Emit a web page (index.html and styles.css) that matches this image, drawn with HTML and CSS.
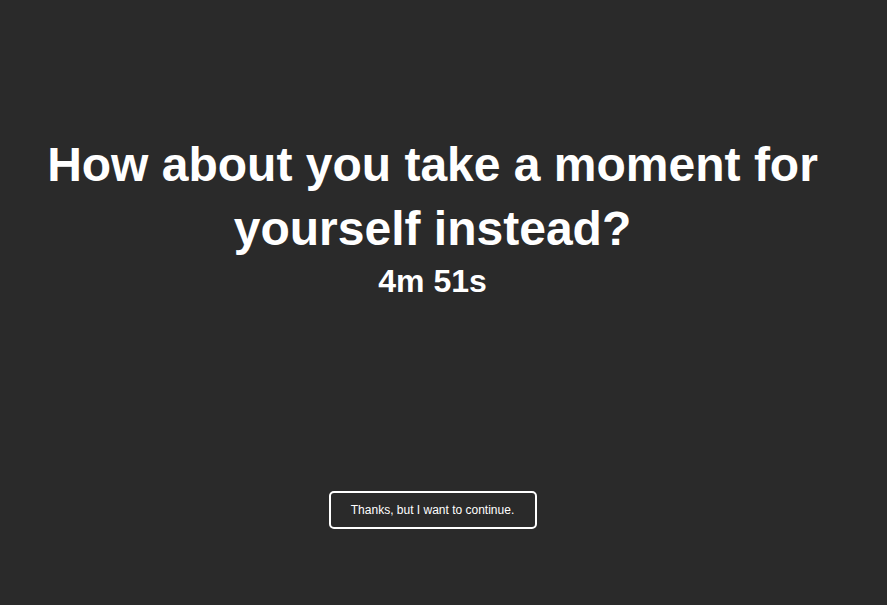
FILE: index.html
```html
<!DOCTYPE html>
<html>
<head>
<meta charset="utf-8">
<link rel="stylesheet" href="styles.css">
</head>
<body>
<main class="page">
  <h1 class="title">How about you take a moment for yourself instead?</h1>
  <div class="timer">4m 51s</div>
  <button class="continue">Thanks, but I want to continue.</button>
</main>
</body>
</html>
```
FILE: styles.css
```css
html, body {
  margin: 0;
  padding: 0;
  background: #2a2a2a;
  height: 100%;
}
.page {
  display: flex;
  flex-direction: column;
  align-items: center;
  font-family: "Liberation Sans", Arial, sans-serif;
  color: #ffffff;
  padding: 133px 43px 0 21px;
}
.title {
  margin: 0;
  font-size: 48px;
  font-weight: bold;
  line-height: 64px;
  text-align: center;
  max-width: 800px;
}
.timer {
  font-size: 32px;
  font-weight: bold;
  line-height: 40px;
  margin-top: 0;
}
.continue {
  margin-top: 190px;
  background: transparent;
  border: 2px solid #ffffff;
  border-radius: 5px;
  color: #ffffff;
  font-family: "Liberation Sans", Arial, sans-serif;
  font-size: 12px;
  width: 208px;
  height: 38px;
  padding: 0;
}
```
